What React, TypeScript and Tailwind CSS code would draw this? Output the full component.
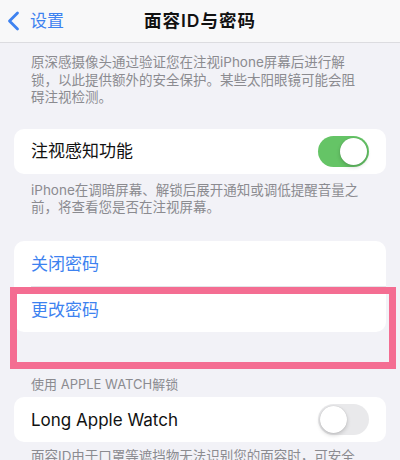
import React from "react";

const FONT = { fontFamily: '"Inter", "Noto Sans CJK SC", "Noto Sans", sans-serif' };

function Toggle({ on }: { on: boolean }) {
  return (
    <div
      className={
        "relative w-[51px] h-[31px] rounded-full shrink-0 " +
        (on ? "bg-[#65c466]" : "bg-[#e9e9eb]")
      }
    >
      <div
        className={
          "absolute top-[2px] w-[27px] h-[27px] rounded-full bg-white shadow-[0_2px_4px_rgba(0,0,0,0.18),0_0_1px_rgba(0,0,0,0.2)] " +
          (on ? "left-[22px]" : "left-[2px]")
        }
      />
    </div>
  );
}

export default function App() {
  return (
    <div
      className="relative w-[400px] h-[460px] overflow-hidden bg-[#f2f2f7] text-black"
      style={FONT}
    >
      {/* Header */}
      <div className="grid grid-cols-[1fr_auto_1fr] items-center h-[43px] bg-[#f8f8f9] border-b border-[#dcdce0]">
        <div className="flex items-center pl-[7px] gap-[10px] text-[#3d82f0] text-[17px] leading-none">
          <svg width="13" height="20" viewBox="0 0 13 20" fill="none">
            <polyline
              points="10.5,2 2.5,10 10.5,18"
              stroke="#3d82f0"
              strokeWidth="2.8"
              strokeLinecap="round"
              strokeLinejoin="round"
            />
          </svg>
          <span>设置</span>
        </div>
        <div className="text-[17.5px] tracking-[1px] font-semibold leading-none text-[#111]">面容ID与密码</div>
        <div />
      </div>

      {/* Description */}
      <div className="px-[31px] pt-[11px] text-[13.5px] leading-[17.5px] text-[#8b8b90]">
        <div className="whitespace-nowrap">原深感摄像头通过验证您在注视iPhone屏幕后进行解</div>
        <div className="whitespace-nowrap">锁，以此提供额外的安全保护。某些太阳眼镜可能会阻</div>
        <div className="whitespace-nowrap">碍注视检测。</div>
      </div>

      {/* Card 1 */}
      <div className="mx-[14px] mt-[22px] h-[45px] rounded-[10px] bg-white flex items-center justify-between pl-[17px] pr-[17px]">
        <span className="text-[17px] text-[#111] pt-[2px]">注视感知功能</span>
        <Toggle on />
      </div>

      <div className="px-[31px] mt-[8px] text-[13.5px] leading-[17.5px] text-[#8b8b90]">
        <div className="whitespace-nowrap">iPhone在调暗屏幕、解锁后展开通知或调低提醒音量之</div>
        <div className="whitespace-nowrap">前，将查看您是否在注视屏幕。</div>
      </div>

      {/* Card 2 */}
      <div className="mx-[14px] mt-[24px] rounded-[10px] bg-white">
        <div className="h-[45px] flex items-center pl-[17px] pt-[3px] text-[17px] text-[#3d82f0]">关闭密码</div>
        <div className="ml-[17px] h-px bg-[#e4e4e8]" />
        <div className="h-[45px] flex items-center pl-[17px] pt-[3px] text-[17px] text-[#3d82f0]">更改密码</div>
      </div>

      {/* Section header */}
      <div className="px-[31px] mt-[44px] text-[13px] leading-[17px] text-[#8b8b90]">使用 APPLE WATCH解锁</div>

      {/* Card 3 */}
      <div className="mx-[14px] mt-[4px] h-[45px] rounded-[10px] bg-white flex items-center justify-between pl-[17px] pr-[17px]">
        <span className="text-[17px] text-[#111] pt-[3px]">Long Apple Watch</span>
        <Toggle on={false} />
      </div>

      <div className="px-[31px] mt-[6px] text-[13.5px] leading-[17.5px] text-[#8b8b90]">
        <div className="whitespace-nowrap">面容ID由于口罩等遮挡物无法识别您的面容时，可安全</div>
        <div className="whitespace-nowrap">使用Apple Watch解锁iPhone。</div>
      </div>

      {/* Pink highlight box */}
      <div className="absolute left-[10px] top-[287px] w-[386px] h-[82px] border-[7px] border-[#f46d92] pointer-events-none" />
    </div>
  );
}
